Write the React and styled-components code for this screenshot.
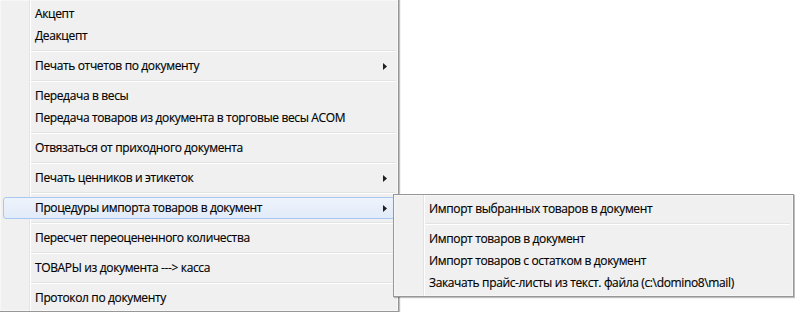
import React from "react";
import styled, { createGlobalStyle } from "styled-components";

const Global = createGlobalStyle`
  html, body { margin: 0; padding: 0; background: #ffffff; }
  body { font-family: "Open Sans", "Noto Sans", sans-serif; }
  #root { width: 795px; height: 312px; overflow: hidden; }
`;

const Stage = styled.div`
  position: relative;
  width: 795px;
  height: 312px;
  overflow: hidden;
  background: #ffffff;
`;

const Menu = styled.div`
  position: ${(p) => (p.$sub ? "absolute" : "relative")};
  left: ${(p) => (p.$sub ? "393px" : "auto")};
  top: ${(p) => (p.$sub ? "194px" : "auto")};
  margin: ${(p) => (p.$sub ? "0" : "-1px 0 0 -1px")};
  width: ${(p) => p.$w}px;
  box-sizing: border-box;
  background: #f0f0f0;
  border: 1px solid #979797;
  box-shadow: inset 0 0 0 1px #f7f7f7, 1px 1px 1px rgba(0, 0, 0, 0.25);
  padding: 3px 3px 2px 3px;
  display: flex;
  flex-direction: column;
  font-family: "Open Sans", "Noto Sans", sans-serif;
  font-size: 12px;
  color: #000;
  z-index: ${(p) => (p.$sub ? 2 : 1)};
`;

const Gutter = styled.div`
  position: absolute;
  top: 0;
  bottom: 0;
  left: 29px;
  width: 1px;
  background: #e2e3e3;
  border-right: 1px solid #ffffff;
  pointer-events: none;
`;

const Item = styled.div`
  position: relative;
  height: 22px;
  box-sizing: border-box;
  display: flex;
  align-items: center;
  justify-content: space-between;
  padding: 0 7px 0 32px;
  border: 1px solid ${(p) => (p.$active ? "#a8c8f0" : "transparent")};
  border-radius: 3px;
  background: ${(p) =>
    p.$active ? "linear-gradient(#eef3fb, #e1ebf9)" : "transparent"};
  white-space: nowrap;
`;

const Label = styled.span`
  margin-left: -1px;
  line-height: 20px;
  letter-spacing: -0.36px;
  -webkit-text-stroke: 0.15px #000;
`;

const Separator = styled.div`
  position: relative;
  height: 8px;
  display: flex;
  align-items: center;
  padding-left: 28px;
  &::after {
    content: "";
    flex: 1;
    height: 1px;
    background: #e2e3e3;
    border-bottom: 1px solid #ffffff;
  }
`;

const Arrow = () => (
  <svg width="4" height="7" viewBox="0 0 4 7">
    <path d="M0 0 L4 3.5 L0 7 Z" fill="#202020" />
  </svg>
);

const main = [
  ["Акцепт"],
  ["Деакцепт"],
  "-",
  ["Печать отчетов по документу", true],
  "-",
  ["Передача в весы"],
  ["Передача товаров из документа в торговые весы АСОМ"],
  "-",
  ["Отвязаться от приходного документа"],
  "-",
  ["Печать ценников и этикеток", true],
  "-",
  ["Процедуры импорта товаров в документ", true, true],
  "-",
  ["Пересчет переоцененного количества"],
  "-",
  ["ТОВАРЫ из документа ---> касса"],
  "-",
  ["Протокол по документу"],
];

const sub = [
  ["Импорт выбранных товаров в документ"],
  "-",
  ["Импорт товаров в документ"],
  ["Импорт товаров с остатком в документ"],
  ["Закачать прайс-листы из текст. файла (c:\\domino8\\mail)"],
];

const renderList = (list) =>
  list.map((it, i) =>
    it === "-" ? (
      <Separator key={i} />
    ) : (
      <Item key={i} $active={it[2]}>
        <Label>{it[0]}</Label>
        {it[1] && <Arrow />}
      </Item>
    )
  );

export default function App() {
  return (
    <Stage>
      <Global />
      <Menu $w={400}>
        <Gutter />
        {renderList(main)}
      </Menu>
      <Menu $sub $w={401}>
        <Gutter />
        {renderList(sub)}
      </Menu>
    </Stage>
  );
}
